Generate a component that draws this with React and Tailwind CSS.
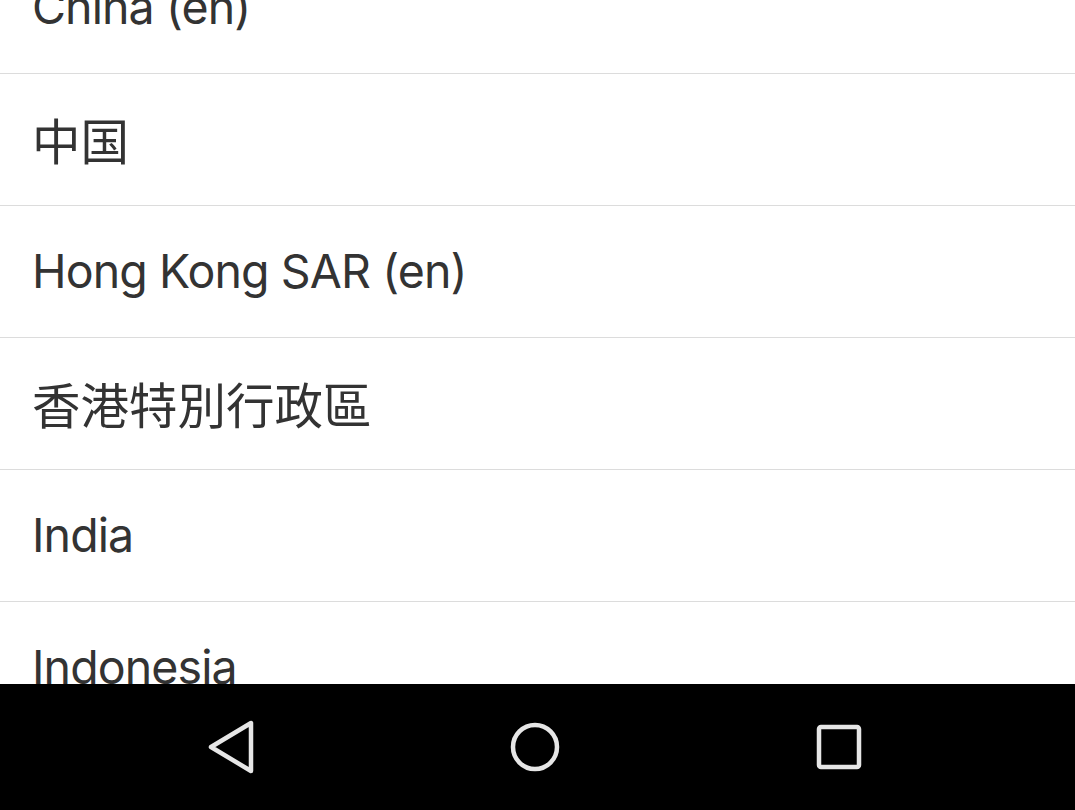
import React from 'react';

const regions = [
  { label: 'China (en)', lang: 'en' },
  { label: '中国', lang: 'sc' },
  { label: 'Hong Kong SAR (en)', lang: 'en' },
  { label: '香港特別行政區', lang: 'tc' },
  { label: 'India', lang: 'en' },
  { label: 'Indonesia', lang: 'en' },
];

const fontFor = {
  en: 'font-["Inter","Noto_Sans",sans-serif] text-[46.5px] tracking-[-0.9px]',
  sc: 'font-["Noto_Sans_CJK_SC",sans-serif] text-[48.5px]',
  tc: 'font-["Noto_Sans_CJK_TC",sans-serif] text-[48.5px]',
};

function RegionRow({ label, lang, first }) {
  return (
    <div
      className={`flex h-[132px] shrink-0 items-center border-b border-[#dcdcdc] px-[32px] ${
        first ? '-mt-[58px]' : ''
      }`}
    >
      <span className={`${fontFor[lang]} leading-none text-[#333333]`}>{label}</span>
    </div>
  );
}

function NavBar() {
  return (
    <div className="flex h-[126px] items-center justify-center bg-black pr-[5px]">
      <div className="flex w-[304px] justify-center">
        <svg width="48" height="54" viewBox="0 0 48 54" fill="none">
          <path
            d="M44 3 L44 51 L4 27 Z"
            stroke="#e6e6e6"
            strokeWidth="4.5"
            strokeLinejoin="round"
          />
        </svg>
      </div>
      <div className="flex w-[304px] justify-center">
        <svg width="52" height="52" viewBox="0 0 52 52" fill="none">
          <circle cx="26" cy="26" r="22" stroke="#e6e6e6" strokeWidth="4.5" />
        </svg>
      </div>
      <div className="flex w-[304px] justify-center">
        <svg width="46" height="46" viewBox="0 0 46 46" fill="none">
          <rect
            x="3"
            y="3"
            width="40"
            height="40"
            rx="2"
            stroke="#e6e6e6"
            strokeWidth="4.5"
          />
        </svg>
      </div>
    </div>
  );
}

export default function App() {
  return (
    <div className="flex h-[810px] w-full flex-col bg-white">
      <div className="flex h-[684px] flex-col overflow-hidden">
        {regions.map((r, i) => (
          <RegionRow key={r.label} label={r.label} lang={r.lang} first={i === 0} />
        ))}
      </div>
      <NavBar />
    </div>
  );
}
